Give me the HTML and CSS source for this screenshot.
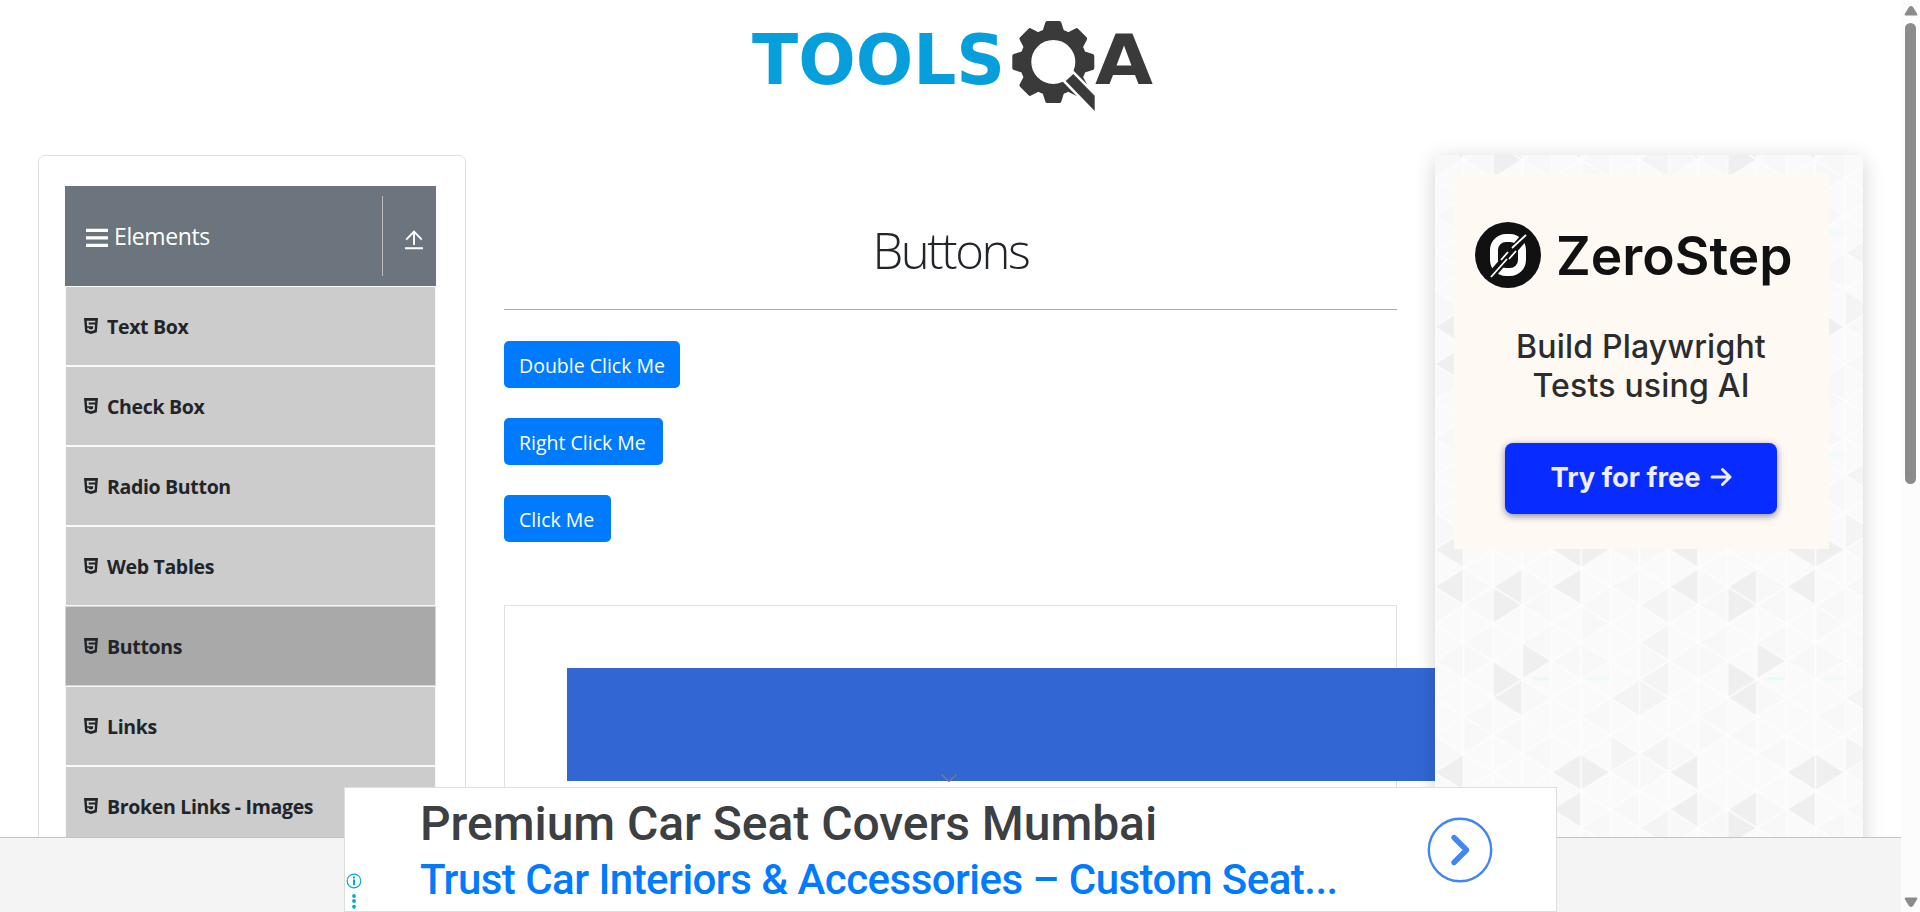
FILE: index.html
```html
<!DOCTYPE html>
<html lang="en">
<head>
<meta charset="utf-8">
<title>ToolsQA - Buttons</title>
<link rel="stylesheet" href="styles.css">
</head>
<body>
<svg class="defs" width="0" height="0" aria-hidden="true">
  <symbol id="html5" viewBox="0 0 14 16"><path fill="currentColor" fill-rule="evenodd" d="M0 0H14L12.8 14.2L7 16L1.2 14.2ZM2.7 2.7L3.1 8.2H9.2L9 10.8L7 11.4L5 10.8L4.9 9.8H3.2L3.4 12.1L7 13.3L10.6 12.1L11 6.6H4.8L4.6 4.5H11.2L11.4 2.7Z"/></symbol>
</svg>
<div class="window">
  <div class="page">
    <div class="content">
      <header class="top">
        <svg class="logo" width="404" height="104" viewBox="750 14 404 104">
          <text class="logo-text logo-blue" x="752" y="83.5" textLength="253" lengthAdjust="spacingAndGlyphs">TOOLS</text>
          <g fill="#3a3a3a" transform="translate(1053.3 62)">
            <g id="teeth">
              <path id="tooth" d="M-11-30L-8-39.5Q-7.6-41-6-41H6Q7.6-41 8-39.5L11-30V-26H-11Z"/>
              <use href="#tooth" transform="rotate(45)"/><use href="#tooth" transform="rotate(90)"/><use href="#tooth" transform="rotate(135)"/>
            </g>
            <use href="#teeth" transform="rotate(180)"/>
            <circle r="27.7" fill="none" stroke="#3a3a3a" stroke-width="11.4"/>
            <path d="M12.4 19L20 12L41.4 33.7V49Z" stroke="#fff" stroke-width="5"/>
            <path d="M12.4 19L20 12L41.4 33.7V49Z"/>
          </g>
          <text class="logo-text logo-dark" x="1095" y="83.5" textLength="58" lengthAdjust="spacingAndGlyphs">A</text>
        </svg>
      </header>
      <div class="columns">
        <aside class="sidebar">
          <div class="group">
            <svg class="bars" width="22" height="20" viewBox="0 0 22 20"><path stroke="#fff" stroke-width="3.4" d="M0 2.4H22M0 9.9H22M0 17.4H22"/></svg>
            <span class="group-name">Elements</span>
            <span class="collapse"><svg width="18" height="20" viewBox="0 0 18 20"><path fill="none" stroke="#fff" stroke-width="1.9" d="M0 18.3H18M9 15V1.5M1.2 9.7L9 1.7L16.8 9.7"/></svg></span>
          </div>
          <ul class="menu">
            <li><svg><use href="#html5"/></svg><span>Text Box</span></li>
            <li><svg><use href="#html5"/></svg><span>Check Box</span></li>
            <li><svg><use href="#html5"/></svg><span>Radio Button</span></li>
            <li><svg><use href="#html5"/></svg><span>Web Tables</span></li>
            <li class="active"><svg><use href="#html5"/></svg><span>Buttons</span></li>
            <li><svg><use href="#html5"/></svg><span>Links</span></li>
            <li><svg><use href="#html5"/></svg><span>Broken Links - Images</span></li>
          </ul>
        </aside>
        <main class="main">
          <h1>Buttons</h1>
          <div class="actions">
            <button class="b1">Double Click Me</button>
            <button class="b2">Right Click Me</button>
            <button class="b3">Click Me</button>
          </div>
          <div class="frame"><div class="banner">
            <svg width="16" height="8" viewBox="0 0 16 8"><path fill="none" stroke="#7d7d88" stroke-width="1.3" d="M.5.5L8 7.5L15.5.5"/></svg>
          </div></div>
        </main>
        <aside class="promo">
          <svg class="pattern" width="428" height="700">
            <defs>
              <path id="l" d="M0 0L29.33-18.55V18.55Z"/>
              <path id="r" d="M0-18.55L29.33 0L0 18.55Z"/>
              <pattern id="tris" patternUnits="userSpaceOnUse" width="234.67" height="222.7" patternTransform="translate(-.7 190.45)">
                <rect width="234.67" height="222.7" fill="#fafafa"/>
                <g fill="#f8f8f8">
                  <use href="#l" x="29.33" y="37.1"/><use href="#l" x="29.33" y="74.2"/><use href="#r" x="0" y="37.1"/><use href="#l" x="88" y="37.1"/>
                  <use href="#r" x="29.33" y="18.55"/><use href="#r" x="29.33" y="92.8"/><use href="#l" x="0" y="92.8"/><use href="#r" x="88" y="18.55"/>
                  <use href="#l" x="176" y="18.55"/><use href="#l" x="146.67" y="37.1"/><use href="#r" x="146.67" y="55.7"/><use href="#l" x="88" y="74.2"/>
                  <use href="#l" x="117.33" y="92.8"/><use href="#r" x="146.67" y="92.8"/><use href="#r" x="205.33" y="92.8"/><use href="#l" x="58.67" y="167"/>
                  <use href="#l" x="146.67" y="148.4"/><use href="#r" x="88" y="129.9"/><use href="#l" x="29.33" y="148.4"/><use href="#r" x="29.33" y="167"/>
                  <use href="#r" x="0" y="185.6"/><use href="#l" x="88" y="185.6"/><use href="#r" x="205.33" y="204.1"/><use href="#l" x="176" y="204.1"/>
                </g>
                <g fill="#f4f4f4">
                  <use href="#l" x="205.33" y="37.1"/><use href="#l" x="205.33" y="74.2"/><use href="#l" x="205.33" y="111.3"/>
                  <use href="#l" x="176" y="129.9"/><use href="#r" x="205.33" y="129.9"/><use href="#r" x="176" y="185.6"/><use href="#l" x="205.33" y="185.6"/>
                </g>
                <g fill="#efefef">
                  <use href="#l" x="0" y="18.55"/><use href="#l" x="58.67" y="18.55"/><use href="#l" x="117.33" y="18.55"/>
                  <use href="#r" x="58.67" y="37.1"/><use href="#r" x="88" y="92.8"/><use href="#r" x="58.67" y="111.3"/><use href="#l" x="58.67" y="129.9"/>
                  <use href="#l" x="0" y="204.1"/><use href="#l" x="117.33" y="204.1"/><use href="#r" x="146.67" y="204.1"/>
                </g>
                <ellipse cx="107" cy="110.5" rx="9" ry="1.8" fill="#e8fbfb"/><ellipse cx="164" cy="110" rx="13" ry="2.2" fill="#f1fbfa"/>
              </pattern>
              <pattern id="grid" patternUnits="userSpaceOnUse" width="58.667" height="37.117" patternTransform="translate(-.7 190.45)">
                <path fill="none" stroke="#fdfdfd" stroke-width="1.5" d="M0 18.55L29.33 0L58.67 18.55L29.33 37.1ZM0 0V37.2M29.33 0V37.2M58.67 0V37.2"/>
              </pattern>
            </defs>
            <rect width="428" height="700" fill="url(#tris)"/><rect width="428" height="700" fill="url(#grid)"/>
          </svg>
          <div class="zero">
            <div class="zero-brand">
              <svg width="66" height="66" viewBox="-33 -33 66 66">
                <circle r="33" fill="#111"/>
                <rect x="-14" y="-17" width="28" height="34" rx="12" fill="none" stroke="#fff" stroke-width="8"/>
                <path stroke="#111" stroke-width="8" d="M-18 22L19-21"/>
                <path stroke="#fff" stroke-width="1.8" d="M-17 22L-1 4M-7 5L0-3M1 4L8-4M4-7L18-20"/>
              </svg>
              <span>ZeroStep</span>
            </div>
            <div class="zero-copy"><span class="z1">Build Playwright</span><span class="z2">Tests using AI</span></div>
            <div class="zero-cta"><span>Try for free</span><svg width="22" height="20" viewBox="0 0 22 20"><path fill="none" stroke="#eef" stroke-width="3" stroke-linecap="round" stroke-linejoin="round" d="M2 10H20M12.5 2.5L20 10L12.5 17.5"/></svg></div>
          </div>
        </aside>
      </div>
    </div>
    <footer class="foot"></footer>
    <section class="ad">
      <div class="ad-mark"><svg width="16" height="32" viewBox="0 0 16 32"><circle cx="8" cy="8" r="6.8" fill="none" stroke="#00aecd" stroke-width="1.2"/><path stroke="#00aecd" stroke-width="2" d="M8 3.6V5.4M8 6.6V12.2"/><g fill="#00aecd"><circle cx="8" cy="23" r="1.9"/><circle cx="8" cy="28" r="1.9"/></g></svg><svg width="16" height="5" viewBox="0 0 16 5"><circle cx="8" cy="1.8" r="1.9" fill="#00aecd"/></svg></div>
      <div class="ad-copy"><span class="ad-title">Premium Car Seat Covers Mumbai</span><span class="ad-sub">Trust Car Interiors &amp; Accessories – Custom Seat...</span></div>
      <svg class="ad-go" width="66" height="66" viewBox="-33 -33 66 66"><circle r="31.2" fill="none" stroke="#4285f4" stroke-width="2.4"/><path fill="none" stroke="#4285f4" stroke-width="5.4" stroke-linecap="round" stroke-linejoin="round" d="M-6-12.5L6.5 0L-6 12.5"/></svg>
    </section>
  </div>
  <div class="scroll">
    <svg width="14" height="10" viewBox="0 0 14 10"><path fill="#8b8b8b" d="M7 0Q8 0 9 1L13 7.5Q14 9.5 12 9.5H2Q0 9.5 1 7.5L5 1Q6 0 7 0Z"/></svg>
    <div class="thumb"></div>
    <svg class="down" width="14" height="10" viewBox="0 0 14 10"><path fill="#8b8b8b" d="M7 10Q6 10 5 9L1 2.5Q0 .5 2 .5H12Q14 .5 13 2.5L9 9Q8 10 7 10Z"/></svg>
  </div>
</div>
</body>
</html>
```
FILE: styles.css
```css
* { box-sizing: border-box; }
body { margin: 0; overflow: hidden; background: #fff; color: #212529; font-family: "Open Sans", "Noto Sans", sans-serif; font-size: 20px; }
span { white-space: nowrap; }
svg { display: block; flex: none; }
.defs { position: absolute; }
.window { display: flex; width: 1920px; height: 912px; overflow: hidden; }
.page { position: relative; width: 1901px; display: flex; flex-direction: column; }
.content { height: 837px; overflow: hidden; }
.top { height: 155px; padding: 14px 0 0 750px; }
.logo-text { font-family: "DejaVu Sans", sans-serif; font-weight: bold; font-size: 69.5px; }
.logo-blue { fill: #069fdc; }
.logo-dark { fill: #3a3a3a; }
.columns { display: flex; padding-left: 38px; height: 700px; }

.sidebar { width: 428px; border: 1px solid #dfdfdf; border-radius: 7px; padding: 30px 29px 0 26px; }
.group { display: flex; align-items: center; width: 371px; height: 100px; padding: 10px 0 10px 21px; background: #6c757d; color: #fff; }
.bars { margin-top: 4px; }
.group-name { margin-left: 6px; font-size: 23px; line-height: 30px; letter-spacing: -.4px; }
.collapse { display: flex; align-items: center; height: 80px; margin-left: auto; padding: 7px 13px 0 22px; border-left: 1px solid #bbb; }
.menu { list-style: none; margin: 0; padding: 0; width: 371px; }
.menu li { display: flex; align-items: center; height: 80px; padding-left: 18px; background: #ccc; border: 1px solid #f8f9fa; font-weight: 700; }
.menu li.active { background: #a9a9a9; border-color: #d3d3da; }
.menu svg { width: 14px; height: 16px; margin-right: 9px; }
.menu span { padding-top: 1px; font-size: 19.5px; letter-spacing: -.33px; }

.main { width: 893px; margin-left: 38px; }
h1 { height: 155px; margin: 0; padding-top: 61px; border-bottom: 1px solid #adadad; text-align: center; font-size: 49px; line-height: 68px; font-weight: 300; letter-spacing: -2.4px; }
.actions { display: flex; flex-direction: column; align-items: flex-start; gap: 30px; padding-top: 31px; }
button { height: 47px; padding: 2px 0 0 15px; border: 0; border-radius: 5px; background: #007bff; color: #fff; font: 19.5px/45px "Open Sans", sans-serif; text-align: left; white-space: nowrap; letter-spacing: 0; }
.b1 { width: 176px; }
.b2 { width: 159px; }
.b3 { width: 107px; }
.frame { height: 300px; margin-top: 63px; padding: 62px 0 0 62px; border: 1px solid #e1e1e1; }
.banner { width: 868px; height: 113px; padding: 106px 0 0 374px; background: rgba(46, 100, 210, .98); }

.promo { position: relative; z-index: 1; width: 428px; height: 700px; margin-left: 38px; padding: 19px; background: #fafafa; box-shadow: 0 5px 20px rgba(0, 0, 0, .18); }
.pattern { position: absolute; left: 0; top: 0; }
.zero { position: relative; width: 375px; height: 375px; padding: 48px 0 0 21px; background: #fef9f2; font-family: Inter, sans-serif; color: #2c2c2c; }
.zero-brand { display: flex; align-items: center; height: 66px; gap: 15px; color: #111; font-size: 53.3px; font-weight: 600; }
.zero-copy { display: flex; flex-direction: column; align-items: center; width: 332px; margin-top: 39px; font-size: 32px; line-height: 39px; font-weight: 500; letter-spacing: .2px; }
.zero-cta { display: flex; align-items: center; justify-content: center; gap: 9px; width: 272px; height: 71px; margin: 38px 0 0 30px; padding-bottom: 4px; border-radius: 8px; background: #082cff; color: #eef; font-size: 27.4px; font-weight: 700; box-shadow: 0 2px 7px rgba(10, 10, 80, .5); }

.foot { height: 75px; background: #f4f4f4; border-top: 1px solid #c4c4c4; }
.ad { position: absolute; z-index: 2; left: 344px; top: 787px; width: 1213px; height: 125px; display: flex; background: #fff; border: 1px solid #dedede; }
.ad-mark { padding: 85px 0 0 1px; }
.ad-copy { display: flex; flex-direction: column; width: 990px; padding: 7px 0 0 58px; font-family: Roboto, sans-serif; font-weight: 500; }
.ad-title { font-size: 48px; line-height: 58px; color: #3c4043; letter-spacing: -.05px; }
.ad-sub { font-size: 42px; line-height: 54px; color: #007bff; letter-spacing: -.53px; }
.ad-go { margin: 29px 0 0 75px; }

.scroll { width: 19px; padding: 6px 0 0 3px; background: #fcfcfc; }
.thumb { width: 11px; height: 461px; margin: 7px 0 0 1px; border-radius: 6px; background: #8b8b8b; }
.down { margin-top: 413px; }
```
